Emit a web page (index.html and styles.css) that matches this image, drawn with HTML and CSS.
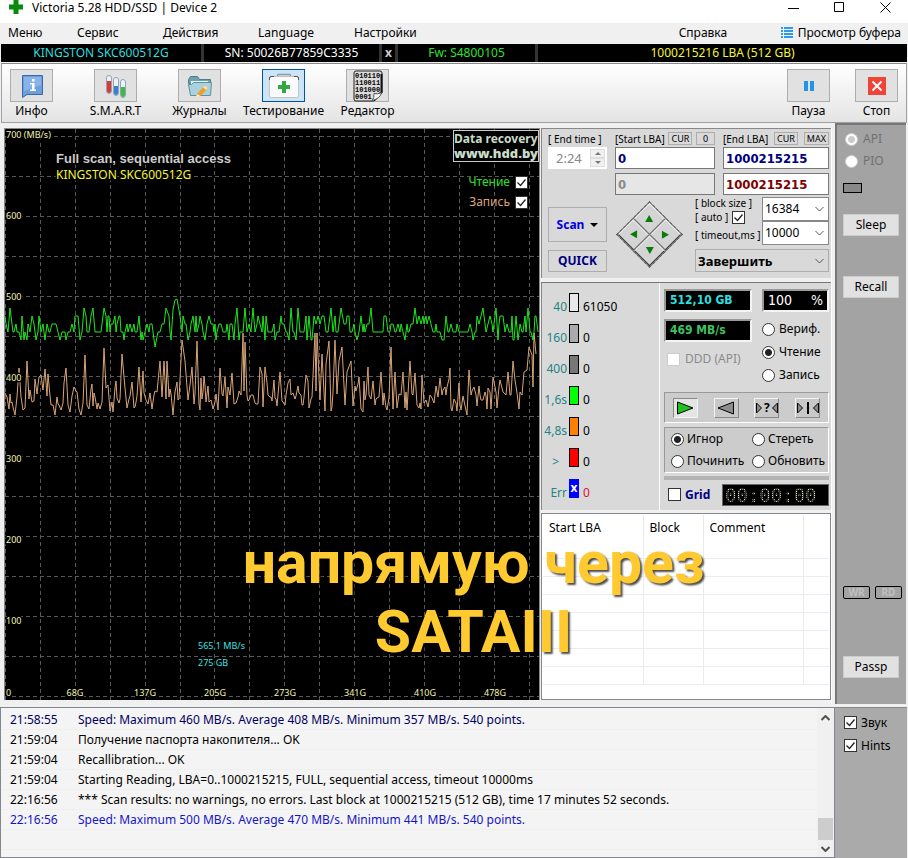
FILE: index.html
```
<!DOCTYPE html>
<html lang="ru">

<head>
    <meta charset="UTF-8">
    <meta name="viewport" content="width=device-width, initial-scale=1.0">
    <title>Victoria 5.28 HDD/SSD | Device 2</title>
    <link rel="stylesheet" href="styles.css">
</head>

<body>
    <header class="titlebar">
        <svg class="logo" width="14" height="14" viewBox="0 0 14 14"><path d="M4.500 0h5v4.500H14v5H9.500V14h-5V9.500H0v-5h4.500z" fill="#0a8a0a"/></svg>
        <h1>Victoria 5.28 HDD/SSD | Device 2</h1>
        <button class="win-btn" aria-label="Minimize"><svg width="11" height="11"><path d="M0 6.500h11" stroke="#000"/></svg></button>
        <button class="win-btn" aria-label="Maximize"><svg width="11" height="11"><path d="M.5.5h9v9h-9z" fill="none" stroke="#000"/></svg></button>
        <button class="win-btn" aria-label="Close"><svg width="11" height="11"><path d="M.5.5l10 10M10.500.5l-10 10" stroke="#000"/></svg></button>
    </header>

    <nav class="menubar">
        <a href="#">Меню</a>
        <a href="#">Сервис</a>
        <a href="#">Действия</a>
        <a href="#">Language</a>
        <a href="#">Настройки</a>
        <a href="#">Справка</a>
        <a href="#" class="buffer"><svg width="12" height="12"><path d="M0 1h2M0 4h2M0 7h2M0 10h2M3 1h9M3 4h9M3 7h9M3 10h9" stroke="#2f9be8" stroke-width="2"/></svg>Просмотр буфера</a>
    </nav>

    <div class="drive-bar">
        <span class="model">KINGSTON SKC600512G</span>
        <span>SN: 50026B77859C3335</span>
        <button class="drive-close">x</button>
        <span class="firmware">Fw: S4800105</span>
        <span class="capacity">1000215216 LBA (512 GB)</span>
    </div>

    <div class="toolbar">
        <div class="tools">
            <button class="tool">
                <span class="tool-icon"><svg width="24" height="26" viewBox="0 0 24 26"><path d="M2.500 2.500h20v19H7l-4.500 3z" fill="#6d9edd" stroke="#3c67a8"/><path d="M4 4h17v8L4 18z" fill="#8ab4e8"/><path d="M12 6h2.500v2.500H12zM10 10h4.500v6.500H16V18h-6v-1.500h2v-5h-2z" fill="#fff"/></svg></span>
                Инфо
            </button>
            <button class="tool">
                <span class="tool-icon"><svg width="24" height="26" viewBox="0 0 24 26"><g stroke="#8fa3ba"><rect x="2.500" y="2.500" width="5" height="18" rx="2.500" fill="#eef3fa"/><rect x="9.500" y="4.500" width="5" height="18" rx="2.500" fill="#eef3fa"/><rect x="16.500" y="6.500" width="5" height="18" rx="2.500" fill="#eef3fa"/></g><path d="M3 8h4v10a2 2 0 0 1-4 0z" fill="#d93a32"/><path d="M10 13h4v7a2 2 0 0 1-4 0z" fill="#3d7fd0"/><path d="M17 14h4v8a2 2 0 0 1-4 0z" fill="#3fbb45"/></svg></span>
                S.M.A.R.T
            </button>
            <button class="tool">
                <span class="tool-icon"><svg width="26" height="26" viewBox="0 0 26 26"><path d="M1.500 6.500l2-3h7l2 3h11v4h-22z" fill="#6fa0ae" stroke="#4d7c8b"/><path d="M4 8h17v9H4z" fill="#e9f3f6"/><path d="M1.500 11.500h3l2-2h18l-1 13h-20z" fill="#a9d2de" stroke="#5d90a0"/><path d="M10 21l8-8.500 3 2.500-7.500 8-4.500 1.500z" fill="#f79a1e"/><path d="M16 14.500l2-2 3 2.500-2 2z" fill="#fde0a8"/><path d="M10 21l3.500 2-4.500 1.500z" fill="#fff1d6"/></svg></span>
                Журналы
            </button>
            <button class="tool active">
                <span class="tool-icon"><svg width="32" height="28" viewBox="0 0 32 28"><path d="M9.500 5V3.500q0-1 1-1h11q1 0 1 1V5" fill="none" stroke="#999" stroke-width="1.500"/><rect x="1.500" y="4.500" width="29" height="21" rx="2" fill="#fafafa" stroke="#c2c2c2"/><path d="M1.500 8V6q0-1.500 1.500-1.500h3M30.500 8V6q0-1.500-1.500-1.500h-3" fill="none" stroke="#555"/><path d="M14 9h4v4h4v4h-4v4h-4v-4h-4v-4h4z" fill="#32a844"/></svg></span>
                Тестирование
            </button>
            <button class="tool">
                <span class="tool-icon"><svg width="30" height="32" viewBox="0 0 30 32"><path d="M3 1h24q2 0 2 2v20l-8 8H3q-2 0-2-2V3q0-2 2-2z" fill="#dcdcdc" stroke="#222"/><path d="M28.500 4v18l-7 8" fill="none" stroke="#111" stroke-width="2"/><g class="bits"><text x="2" y="8">010110</text><text x="2" y="15">110011</text><text x="2" y="22">101000</text><text x="2" y="29">0001</text></g><path d="M19 30.500q2.500-2 2-7 4 1 7.500-1-1 6-9.500 8z" fill="#f6f6f6" stroke="#555"/></svg></span>
                Редактор
            </button>
        </div>
        <div class="tools right">
            <button class="tool">
                <span class="tool-icon"><svg width="10" height="10"><path d="M0 0h4v10H0zM6 0h4v10H6z" fill="#2196e8"/></svg></span>
                Пауза
            </button>
            <button class="tool">
                <span class="tool-icon"><svg width="18" height="18"><path d="M0 0h18v18H0z" fill="#f04438"/><path d="M4.500 4.500l9 9M13.500 4.500l-9 9" stroke="#fff" stroke-width="2"/></svg></span>
                Стоп
            </button>
        </div>
    </div>

    <main class="workspace">
        <section class="graph">
            <svg id="plot" viewBox="0 0 534 571" preserveAspectRatio="xMinYMin slice"></svg>
            <a class="banner" href="#">Data recovery<br><b>www.hdd.by</b></a>
            <div class="legend">
                <label class="read">Чтение <input type="checkbox" checked></label>
                <label class="write">Запись <input type="checkbox" checked></label>
            </div>
        </section>

        <section class="controls">
            <div class="settings">
                <div class="ranges">
                    <div class="range">
                        <div class="range-head"><label for="end-time">[ End time ]</label></div>
                        <div class="spinner">
                            <input id="end-time" type="text" value="2:24" disabled>
                            <button disabled aria-label="Up"><i class="up"></i></button>
                            <button disabled aria-label="Down"><i class="down"></i></button>
                        </div>
                    </div>
                    <div class="range">
                        <div class="range-head"><label for="start-lba">[Start LBA]</label><button>CUR</button><button>0</button></div>
                        <input id="start-lba" type="text" value="0">
                        <input type="text" value="0" disabled aria-label="Current start">
                    </div>
                    <div class="range">
                        <div class="range-head"><label for="end-lba">[End LBA]</label><button>CUR</button><button>MAX</button></div>
                        <input id="end-lba" type="text" value="1000215215">
                        <input class="last" type="text" value="1000215215" aria-label="Current end">
                    </div>
                </div>
                <div class="actions">
                    <div class="run">
                        <button class="scan">Scan <i class="caret"></i></button>
                        <button class="quick">QUICK</button>
                    </div>
                    <div class="pad">
                        <button aria-label="Up"><i></i></button>
                        <button aria-label="Right"><i class="e"></i></button>
                        <button aria-label="Left"><i class="w"></i></button>
                        <button aria-label="Down"><i class="s"></i></button>
                    </div>
                    <div class="options">
                        <div class="option-labels">
                            <label for="block-size">[ block size ]</label>
                            <label>[ auto ] <input type="checkbox" checked></label>
                            <label for="timeout">[ timeout,ms ]</label>
                        </div>
                        <div class="option-fields">
                            <select id="block-size"><option>16384</option></select>
                            <select id="timeout"><option>10000</option></select>
                        </div>
                        <select class="finish" aria-label="Finish"><option>Завершить</option></select>
                    </div>
                </div>
            </div>

            <div class="status">
                <ul class="counters">
                    <li><span>40</span><i class="c40"></i><b>61050</b></li>
                    <li><span>160</span><i class="c160"></i><b>0</b></li>
                    <li><span>400</span><i class="c400"></i><b>0</b></li>
                    <li><span>1,6s</span><i class="c1600"></i><b>0</b></li>
                    <li><span>4,8s</span><i class="c4800"></i><b>0</b></li>
                    <li><span class="over">&gt;</span><i class="cover"></i><b>0</b></li>
                    <li class="err"><span>Err</span><i>x</i><b>0</b></li>
                </ul>
                <div class="modes">
                    <div class="readout">
                        <div class="readout-left">
                            <output class="lcd size">512,10 GB</output>
                            <output class="lcd speed">469 MB/s</output>
                            <label class="off"><input type="checkbox" disabled>DDD (API)</label>
                        </div>
                        <div class="readout-right">
                            <output class="lcd percent"><span>100</span><span>%</span></output>
                            <label><input type="radio" name="mode">Вериф.</label>
                            <label><input type="radio" name="mode" checked>Чтение</label>
                            <label><input type="radio" name="mode">Запись</label>
                        </div>
                    </div>
                    <div class="direction">
                        <button class="pressed" aria-label="Forward"><svg width="18" height="14"><path d="M1.500 1L17 7 1.500 13z" fill="#1fc01f" stroke="#000"/></svg></button>
                        <button aria-label="Back"><svg width="18" height="14"><path d="M16.500 1L1 7l15.500 6z" fill="#8c8c8c" stroke="#000"/></svg></button>
                        <button aria-label="Random"><svg width="22" height="16"><path d="M.5 3l5 5-5 5zM21.500 3l-5 5 5 5z" fill="#8c8c8c" stroke="#000"/><text x="8" y="12">?</text></svg></button>
                        <button aria-label="Butterfly"><svg width="22" height="14"><path d="M.5 2l5 5-5 5zM21.500 2l-5 5 5 5z" fill="#8c8c8c" stroke="#000"/><path d="M11 1v12" stroke="#000" stroke-width="2"/></svg></button>
                    </div>
                    <div class="defects">
                        <label><input type="radio" name="defect" checked>Игнор</label>
                        <label><input type="radio" name="defect">Стереть</label>
                        <label><input type="radio" name="defect">Починить</label>
                        <label><input type="radio" name="defect">Обновить</label>
                    </div>
                    <div class="timer">
                        <label><input type="checkbox">Grid</label>
                        <div class="clock"><output>00:00:00</output></div>
                    </div>
                </div>
            </div>

            <div class="blocks">
                <table>
                    <thead>
                        <tr><th class="col-lba">Start LBA</th><th class="col-block">Block</th><th class="col-comment">Comment</th><th></th></tr>
                    </thead>
                    <tbody>
                        <tr><td></td><td></td><td></td><td></td></tr>
                        <tr><td></td><td></td><td></td><td></td></tr>
                        <tr><td></td><td></td><td></td><td></td></tr>
                        <tr><td></td><td></td><td></td><td></td></tr>
                        <tr><td></td><td></td><td></td><td></td></tr>
                        <tr><td></td><td></td><td></td><td></td></tr>
                        <tr><td></td><td></td><td></td><td></td></tr>
                        <tr><td></td><td></td><td></td><td></td></tr>
                    </tbody>
                </table>
            </div>
        </section>

        <aside class="side">
            <label class="off"><input type="radio" name="port" checked disabled>API</label>
            <label class="off"><input type="radio" name="port" disabled>PIO</label>
            <i class="lamp"></i>
            <button class="side-btn sleep">Sleep</button>
            <button class="side-btn">Recall</button>
            <div class="leds"><span>WR</span><span>RD</span></div>
            <button class="side-btn">Passp</button>
        </aside>

        <p class="caption">напрямую через SATAIII</p>
    </main>

    <footer class="bottom">
        <div class="log">
            <ol>
                <li class="info"><time>21:58:55</time>Speed: Maximum 460 MB/s. Average 408 MB/s. Minimum 357 MB/s. 540 points.</li>
                <li><time>21:59:04</time>Получение паспорта накопителя... OK</li>
                <li><time>21:59:04</time>Recallibration... OK</li>
                <li><time>21:59:04</time>Starting Reading, LBA=0..1000215215, FULL, sequential access, timeout 10000ms</li>
                <li><time>22:16:56</time>*** Scan results: no warnings, no errors. Last block at 1000215215 (512 GB), time 17 minutes 52 seconds.</li>
                <li class="speed-line"><time>22:16:56</time>Speed: Maximum 500 MB/s. Average 470 MB/s. Minimum 441 MB/s. 540 points.</li>
                <li></li>
            </ol>
            <div class="scroll">
                <svg width="9" height="6"><path d="M.5 5l4-4 4 4" fill="none" stroke="#505050" stroke-width="2"/></svg>
                <i class="thumb"></i>
                <svg width="9" height="6"><path d="M.5 1l4 4 4-4" fill="none" stroke="#505050" stroke-width="2"/></svg>
            </div>
        </div>
        <div class="side-bottom">
            <label><input type="checkbox" checked>Звук</label>
            <label><input type="checkbox" checked>Hints</label>
        </div>
    </footer>

    <script>
        const plot = document.getElementById('plot');
        const parts = [];

        // grid: a line every 50 MB/s and every 34 GB
        for (let i = 0; i < 15; i++) {
            const y = 7.5 + i * 40;
            parts.push(`<path class="grid" d="M0 ${y}H534"/>`);
        }
        for (let i = 0; i < 16; i++) {
            const x = Math.round(i * 34.9) + 0.5;
            parts.push(`<path class="grid" d="M${x} 0V571"/>`);
        }

        let seed = 7;
        function random() {
            seed = (seed * 16807) % 2147483647;
            return seed / 2147483647;
        }

        // points is a list of [x, y]; the peaks replace whatever lies next to them
        function addLine(name, points, peaks) {
            const all = points.filter(([x]) => !peaks.some(([px]) => Math.abs(px - x) < 2)).concat(peaks);
            all.sort((a, b) => a[0] - b[0]);
            parts.push(`<polyline class="${name}" points="${all.map(p => p.join(',')).join(' ')}"/>`);
        }

        // read speed, in steps of 10 MB/s
        const readLevels = [187, 187, 195, 195, 195, 203, 203, 203, 203, 211];
        const read = [];
        for (let x = 0; x < 534; x += random() < 0.6 ? 2 : 1) {
            read.push([x, readLevels[Math.floor(random() * readLevels.length)]]);
        }
        const readPeaks = [[5, 179], [79, 179], [88, 179], [99, 179], [150, 218], [161, 179], [168, 181], [170, 171], [172, 170], [232, 179],
            [240, 179], [248, 179], [286, 179], [293, 179], [326, 179], [336, 179], [366, 179], [410, 179], [478, 179], [491, 179], [523, 179]];

        const write = [];
        for (let x = 0; x < 534; x += random() < 0.5 ? 2 : 1) {
            write.push([x, Math.round(283 - Math.pow(random(), 4) * 30 - random() * 18)]);
        }
        const writePeaks = [[14, 239], [22, 232], [36, 246], [40, 240], [61, 239], [80, 226], [99, 219], [117, 225], [134, 238], [155, 232],
            [159, 232], [162, 232], [177, 211], [180, 232], [187, 238], [192, 212], [215, 239], [238, 204], [240, 213], [255, 238],
            [260, 238], [275, 243], [310, 204], [312, 204], [317, 225], [324, 212], [330, 211], [334, 232], [337, 218], [342, 243],
            [346, 232], [376, 243], [386, 218], [390, 243], [398, 243], [405, 232], [410, 244], [488, 248], [503, 243], [508, 232],
            [519, 243], [524, 218], [527, 226], [529, 204], [531, 225],
            [10, 286], [50, 286], [76, 286], [168, 286], [462, 286], [311, 262], [239, 262], [161, 270], [528, 258]];

        addLine('write', write, writePeaks);
        addLine('read', read, readPeaks);

        ['700 (MB/s)', '600', '500', '400', '300', '200', '100'].forEach((text, i) => {
            parts.push(`<text class="axis" x="1" y="${9 + i * 81}">${text}</text>`);
        });
        ['0', '68G', '137G', '205G', '273G', '341G', '410G', '478G'].forEach((text, i) => {
            parts.push(`<text class="axis${i ? ' mid' : ''}" x="${i ? i * 70 : 1}" y="567">${text}</text>`);
        });
        parts.push('<text class="title" x="51" y="34">Full scan, sequential access</text>');
        parts.push('<text class="drive" x="51" y="50">KINGSTON SKC600512G</text>');
        parts.push('<text class="cursor" x="193" y="520">565,1 MB/s</text>');
        parts.push('<text class="cursor" x="193" y="537">275 GB</text>');
        plot.innerHTML = parts.join('');
    </script>
</body>

</html>
```
FILE: styles.css
```
* {
    box-sizing: border-box;
}

body {
    font-family: "Noto Sans", "DejaVu Sans", sans-serif;
    font-size: 12px;
    line-height: 16px;
    margin: 0;
    min-height: 100vh;
    display: flex;
    flex-direction: column;
    background: #f0f0f0;
    color: #000;
}

button, input, select {
    font: inherit;
    color: inherit;
    margin: 0;
}

button {
    padding: 0;
    border: 1px solid #adadad;
    background: #e1e1e1;
    white-space: nowrap;
}

a {
    color: inherit;
    text-decoration: none;
}

label {
    white-space: nowrap;
}

input[type="checkbox"], input[type="radio"] {
    appearance: none;
    width: 13px;
    height: 13px;
    flex: none;
    border: 1px solid #333;
    background: #fff center / 11px 11px no-repeat;
}

input[type="checkbox"]:checked {
    background-image: url("data:image/svg+xml,%3Csvg xmlns='http://www.w3.org/2000/svg' viewBox='0 0 11 11'%3E%3Cpath d='M1.500 5.500l3 3 5-6' fill='none' stroke='%23222' stroke-width='1.300'/%3E%3C/svg%3E");
}

input[type="radio"] {
    border-radius: 50%;
}

input[type="radio"]:checked {
    background-image: radial-gradient(circle, #222 3px, transparent 4px);
}

input[type="checkbox"]:disabled, input[type="radio"]:disabled {
    border-color: #ccc;
}

input[type="radio"]:disabled:checked {
    background-image: radial-gradient(circle, #ccc 3px, transparent 4px);
}

/* title and menu */
.titlebar {
    display: flex;
    height: 23px;
    padding: 0 17px 0 9px;
    background: #fff;
}

.titlebar h1 {
    flex: 1;
    margin: 0 0 0 9px;
    font-size: 12px;
    font-weight: normal;
}

.win-btn {
    width: 11px;
    height: 14px;
    margin-left: 35px;
    border: none;
    background: none;
}

.win-btn svg {
    display: block;
}

.menubar {
    display: grid;
    grid-template-columns: 69px 86px 95px 96px 1fr 102px auto;
    align-items: center;
    height: 20px;
    padding: 0 7px 1px 8px;
}

.buffer {
    display: flex;
    align-items: center;
    gap: 5px;
}

.drive-bar {
    display: grid;
    grid-template-columns: 203px 178px 16px 140px 1fr;
    height: 18px;
    margin: 1px 1px 0;
    background: #000;
    color: #fff;
    text-align: center;
}

.drive-bar > * {
    border: 0 solid #333;
    border-right-width: 3px;
    line-height: 18px;
}

.drive-bar .model {
    color: #2fdede;
}

.drive-bar .drive-close {
    background: #000;
    color: #ccc;
    font-weight: bold;
}

.drive-bar .firmware {
    color: #2fe02f;
}

.drive-bar .capacity {
    color: #f5f532;
    border: none;
}

/* toolbar */
.toolbar {
    display: flex;
    justify-content: space-between;
    margin: 1px 1px 0;
    padding: 5px 8px 3px 8px;
    border: 1px solid #a0a0a0;
    border-top-color: #888;
    background: linear-gradient(#fff, #e4e4e4);
}

.tools {
    display: flex;
    gap: 41px;
}

.tools.right {
    gap: 25px;
}

.tool {
    display: flex;
    flex-direction: column;
    align-items: center;
    gap: 1px;
    width: 43px;
    border: none;
    background: none;
}

.tool-icon {
    display: flex;
    align-items: center;
    justify-content: center;
    width: 43px;
    height: 33px;
    border: 1px solid #adadad;
    background: #e1e1e1;
}

.tool.active .tool-icon {
    border-color: #00549b;
    background: #cce4f7;
}

.bits {
    font: bold 7px "Liberation Mono", monospace;
}

/* workspace */
.workspace {
    position: relative;
    flex: 1;
    display: grid;
    grid-template-columns: minmax(0, 1fr) 295px 72px;
    margin: 5px 1px 0 4px;
}

.graph {
    position: relative;
    height: 572px;
    border: 1px solid #888;
    border-width: 1px 1px 0;
    background: #000;
    overflow: hidden;
}

#plot {
    display: block;
    width: 100%;
    height: 100%;
}

.grid {
    stroke: #585858;
    stroke-dasharray: 4 3;
}

#plot polyline {
    fill: none;
}

#plot .read {
    stroke: #1ce81c;
}

#plot .write {
    stroke: #d8a578;
}

#plot text {
    stroke: #000;
    stroke-width: 3px;
    paint-order: stroke;
}

.axis {
    font-size: 9px;
    fill: #f4f4b0;
}

.axis.mid {
    text-anchor: middle;
}

.title {
    font: bold 13px "Liberation Sans", Arial, sans-serif;
    fill: #ccc;
}

.drive {
    fill: #f5f532;
}

.cursor {
    font-size: 9px;
    fill: #3fe0e0;
}

.banner {
    position: absolute;
    top: 1px;
    right: 0;
    border: 1px solid #ccc;
    background: #000;
    color: #c8dcc8;
    font-weight: bold;
    line-height: 15px;
}

.banner b {
    font-size: 13px;
}

.legend {
    position: absolute;
    top: 45px;
    right: 11px;
    display: grid;
    gap: 4px;
}

.legend label {
    display: flex;
    align-items: center;
    justify-content: flex-end;
    gap: 5px;
}

.legend .read {
    color: #2fe02f;
}

.legend .write {
    color: #d8a578;
}

.caption {
    position: absolute;
    left: 36px;
    right: 0;
    top: 400px;
    width: 470px;
    margin: 0 auto;
    color: #ffca30;
    font: bold 59px/69px Roboto, sans-serif;
    text-align: center;
    text-shadow: 2px 2px 2px rgba(0, 0, 0, 0.7);
}

.controls {
    display: flex;
    flex-direction: column;
    border-right: 1px solid #fff;
    margin-right: 3px;
    margin-left: 1px;
}

.settings {
    display: flex;
    flex-direction: column;
    gap: 2px;
    height: 150px;
    padding: 3px 2px 7px 6px;
    border: 1px solid #888;
    border-width: 1px 0 0 1px;
    background: #d9d9d9;
}

.ranges {
    display: grid;
    grid-template-columns: 59px 100px 1fr;
    gap: 8px;
}

.range {
    display: flex;
    flex-direction: column;
    gap: 2px;
}

.range-head {
    display: flex;
    justify-content: space-between;
    align-items: center;
    height: 13px;
    font-size: 10px;
}

.range-head button {
    height: 13px;
    padding: 0 2px;
    font-size: 9px;
    line-height: 10px;
    min-width: 19px;
    background: #d9d9d9;
}

.range > input {
    width: 100%;
    height: 22px;
    padding: 0 2px;
    border: 1px solid #777;
    background: #fff;
    color: #000080;
    font: bold 13px "DejaVu Sans Condensed", "DejaVu Sans", sans-serif;
}

.range > input + input {
    margin-top: 2px;
}

.range > input:disabled {
    background: #e6e6e6;
    color: #8a8a8a;
}

.range > .last {
    color: #800000;
}

.spinner {
    display: grid;
    grid-template-columns: 1fr 15px;
    grid-template-rows: 9px 9px;
    padding: 2px;
    background: #fff;
}

.spinner input {
    grid-row: span 2;
    min-width: 0;
    padding: 0 0 0 6px;
    border: none;
    background: none;
    color: #888;
    font-size: 13px;
}

.spinner button {
    display: flex;
    align-items: center;
    justify-content: center;
    border-color: #ddd;
    background: #f0f0f0;
}

.up, .down, .caret {
    border: 3px solid transparent;
    border-bottom: 3px solid #777;
    border-top: none;
}

.down, .caret {
    border-top: 3px solid #777;
    border-bottom: none;
}

.caret {
    border-width: 4px;
    border-top: 4px solid #000;
}

.actions {
    flex: 1;
    display: flex;
    gap: 9px;
}

.run {
    display: grid;
    grid-template-rows: 35px 22px;
    gap: 8px;
    align-content: end;
    width: 59px;
}

.scan, .quick {
    color: #0000e0;
    background: #d9d9d9;
    font-weight: bold;
}

.scan {
    display: flex;
    align-items: center;
    justify-content: center;
    gap: 6px;
}

.quick {
    color: #000080;
}

/* the square of four buttons stands on its corner */
.pad {
    display: grid;
    grid-template-columns: 1fr 1fr;
    grid-template-rows: 1fr 1fr;
    width: 47px;
    height: 47px;
    margin: 14px 9px 0 10px;
    transform: rotate(45deg);
    border: 1px dashed #000;
}

.pad button {
    display: flex;
    align-items: center;
    justify-content: center;
    border: 1px solid #333;
    border-color: #f4f4f4 #333 #333 #f4f4f4;
    outline: 1px solid #777;
    background: #d4d4d4;
}

.pad i {
    border: 4px solid transparent;
    border-bottom: 7px solid #0a7a0a;
    border-top: none;
    transform: rotate(-45deg);
}

.pad .e {
    transform: rotate(45deg);
}

.pad .w {
    transform: rotate(-135deg);
}

.pad .s {
    transform: rotate(135deg);
}

.options {
    display: grid;
    grid-template-columns: 1fr 67px;
    grid-template-rows: 48px 23px;
    row-gap: 4px;
    flex: 1;
    margin-left: 4px;
}

.option-labels {
    display: grid;
    grid-template-rows: 13px 15px 20px;
    font-size: 10px;
    line-height: 13px;
}

.option-labels label {
    display: flex;
    align-items: center;
    gap: 4px;
}

.option-fields {
    display: grid;
}

select {
    appearance: none;
    width: 100%;
    padding: 0 2px;
    border: 1px solid #888;
    border-radius: 0;
    background: #fff url("data:image/svg+xml,%3Csvg xmlns='http://www.w3.org/2000/svg' width='9' height='6'%3E%3Cpath d='M.5 1l4 4 4-4' fill='none' stroke='%23555'/%3E%3C/svg%3E") right 4px center no-repeat;
}

.finish {
    grid-column: span 2;
    border-color: #adadad;
    background-color: #d9d9d9;
    font-weight: bold;
    font-size: 13px;
}

/* counters and modes */
.status {
    display: grid;
    grid-template-columns: 119px 1fr;
    gap: 4px;
    margin-top: 4px;
    padding-right: 2px;
    border-top: 1px solid #777;
    background: #d9d9d9;
    height: 228px;
}

.counters {
    margin: 0;
    padding: 9px 0 0;
    border: 1px solid #888;
    border-width: 0 1px 0 1px;
    border-right-color: #fff;
    list-style: none;
}

.counters li {
    display: grid;
    grid-template-columns: 25px 10px 1fr;
    column-gap: 2px;
    align-items: end;
    height: 31px;
    padding-bottom: 8px;
}

.counters span {
    color: #1e8484;
    text-align: right;
}

.counters .over {
    padding-right: 8px;
}

.counters b {
    font-weight: normal;
    padding-left: 2px;
}

.counters i {
    height: 19px;
    margin-bottom: 3px;
    border: 1px solid #000;
}

.c40 { background: #e8e8e8; }
.c160 { background: #aaa; }
.c400 { background: #777; }
.c1600 { background: #0f0; }
.c4800 { background: #ff8000; }
.cover { background: #f00; }

.counters .err i {
    border: none;
    background: #00f;
    color: #fff;
    font: bold 12px/18px "Noto Sans", sans-serif;
    text-align: center;
}

.counters .err b {
    color: #e01030;
}

.modes {
    display: flex;
    flex-direction: column;
    padding: 6px 0 1px;
}

.readout {
    display: flex;
    justify-content: space-between;
    height: 103px;
}

.readout-left, .readout-right {
    display: flex;
    flex-direction: column;
    width: 88px;
    gap: 7px;
}

.readout-right {
    width: 67px;
}

.lcd {
    height: 23px;
    padding: 0 4px;
    border: 2px solid #999;
    border-color: #999 #f4f4f4 #f4f4f4 #999;
    background: #000;
    font: bold 12px/18px "DejaVu Sans Condensed", "DejaVu Sans", sans-serif;
}

.lcd.size {
    color: #2fdede;
}

.lcd.speed {
    color: #40c060;
}

.percent {
    display: flex;
    justify-content: space-between;
    margin-bottom: 2px;
    color: #fff;
    font-size: 14px;
    font-weight: normal;
}

.readout label, .defects label, .side label, .side-bottom label {
    display: flex;
    align-items: center;
    gap: 4px;
}

.readout-left label {
    gap: 5px;
    padding: 2px 0 0 3px;
}

.off {
    color: #8a8a8a;
}

.direction {
    display: flex;
    justify-content: space-around;
    align-items: center;
    height: 31px;
    border: 1px solid #999;
    border-color: #999 #fff #fff #999;
    background: #ccc;
}

.direction button {
    display: flex;
    align-items: center;
    justify-content: center;
    width: 25px;
    height: 20px;
    border-color: #f4f4f4 #888 #888 #f4f4f4;
    background: #c8c8c8;
    font: bold 12px "Noto Sans", sans-serif;
}

.direction svg {
    flex: none;
}

.direction .pressed {
    border-color: #888 #f4f4f4 #f4f4f4 #888;
    background: #e4e4e4;
}

.defects {
    display: grid;
    grid-template-columns: 81px 1fr;
    grid-auto-rows: 22px;
    height: 46px;
    margin-top: 4px;
    padding-left: 6px;
    border: 1px solid #999;
    border-color: #999 #fff #fff #999;
    background: #ccc;
}

.defects label {
    gap: 3px;
}

.timer {
    display: flex;
    align-items: center;
    justify-content: space-between;
    flex: 1;
    margin-top: 3px;
    padding-left: 4px;
    border-top: 4px solid #b4b4b4;
}

.timer label {
    display: flex;
    align-items: center;
    gap: 4px;
    color: #000080;
    font-weight: bold;
}

.clock {
    height: 22px;
    width: 107px;
    padding-left: 2px;
    border: 1px solid #666;
    background: #000;
}

/* dot-matrix digits: the text only lets a mesh of dots through */
.clock output {
    display: block;
    width: 100px;
    background: conic-gradient(#e4e4b8 90deg, #333 0) 0 0 / 2px 2px;
    background-clip: text;
    color: transparent;
    font: 19px/20px "DejaVu Sans Mono", monospace;
}

/* defect table */
.blocks {
    flex: 1;
    margin-top: 3px;
    padding: 1px;
    border: 1px solid #828790;
    background: #fff;
    max-height: 187px;
}

table {
    width: 100%;
    border-collapse: collapse;
    table-layout: fixed;
}

th {
    height: 25px;
    padding: 0 6px;
    border-right: 1px solid #e8e8e8;
    font-weight: normal;
    text-align: left;
}

th:last-child, td:last-child {
    border-right: none;
}

td {
    height: 18px;
    padding: 0;
    border: 1px solid #ececec;
    border-width: 0 1px 1px 0;
}

.col-lba { width: 100px; }
.col-block { width: 60px; }
.col-comment { width: 100px; }

/* side column */
.side {
    display: flex;
    flex-direction: column;
    align-items: flex-start;
    margin: -5px 1px 0 0;
    padding: 3px 7px 26px 6px;
    border: 1px solid #777;
    border-width: 2px 0 0 2px;
    background: #a3a3a3;
}

.side label {
    height: 22px;
    padding-left: 2px;
    gap: 5px;
}

.side .off {
    color: #707070;
}

.lamp {
    width: 19px;
    height: 10px;
    margin: 11px 0 21px;
    border: 1px solid #000;
    background: #888;
}

.side-btn {
    width: 56px;
    height: 22px;
    border-color: #ccc;
}

.sleep {
    margin-bottom: 40px;
}

.leds {
    display: flex;
    gap: 5px;
    margin: auto 0 57px;
}

.leds span {
    width: 27px;
    height: 13px;
    border: 1px solid #000;
    border-radius: 2px;
    color: #c0c0c0;
    font-size: 10px;
    font-weight: bold;
    line-height: 11px;
    text-align: center;
}

/* log */
.bottom {
    display: grid;
    grid-template-columns: minmax(0, 1fr) 72px;
    height: 151px;
    margin: 3px 1px 0 0;
}

.log {
    display: flex;
    border: 1px solid #828790;
    background: #f4f4f4;
}

.log ol {
    flex: 1;
    margin: 0;
    padding: 2px 0 0;
    list-style: none;
}

.log li {
    height: 20px;
    padding-left: 9px;
    border-bottom: 1px solid #efefef;
    line-height: 20px;
    white-space: nowrap;
}

.log time {
    display: inline-block;
    width: 68px;
}

.log .info {
    color: #000060;
}

.log .speed-line {
    color: #1414c8;
}

.scroll {
    display: flex;
    flex-direction: column;
    align-items: center;
    width: 17px;
    padding: 7px 0 5px;
    background: #f0f0f0;
}

.thumb {
    width: 15px;
    height: 22px;
    margin: auto 0 6px;
    background: #cdcdcd;
}

.side-bottom {
    padding: 3px 9px;
    border-top: 1px solid #888;
    background: #aaa;
}

.side-bottom label {
    height: 23px;
}
```
